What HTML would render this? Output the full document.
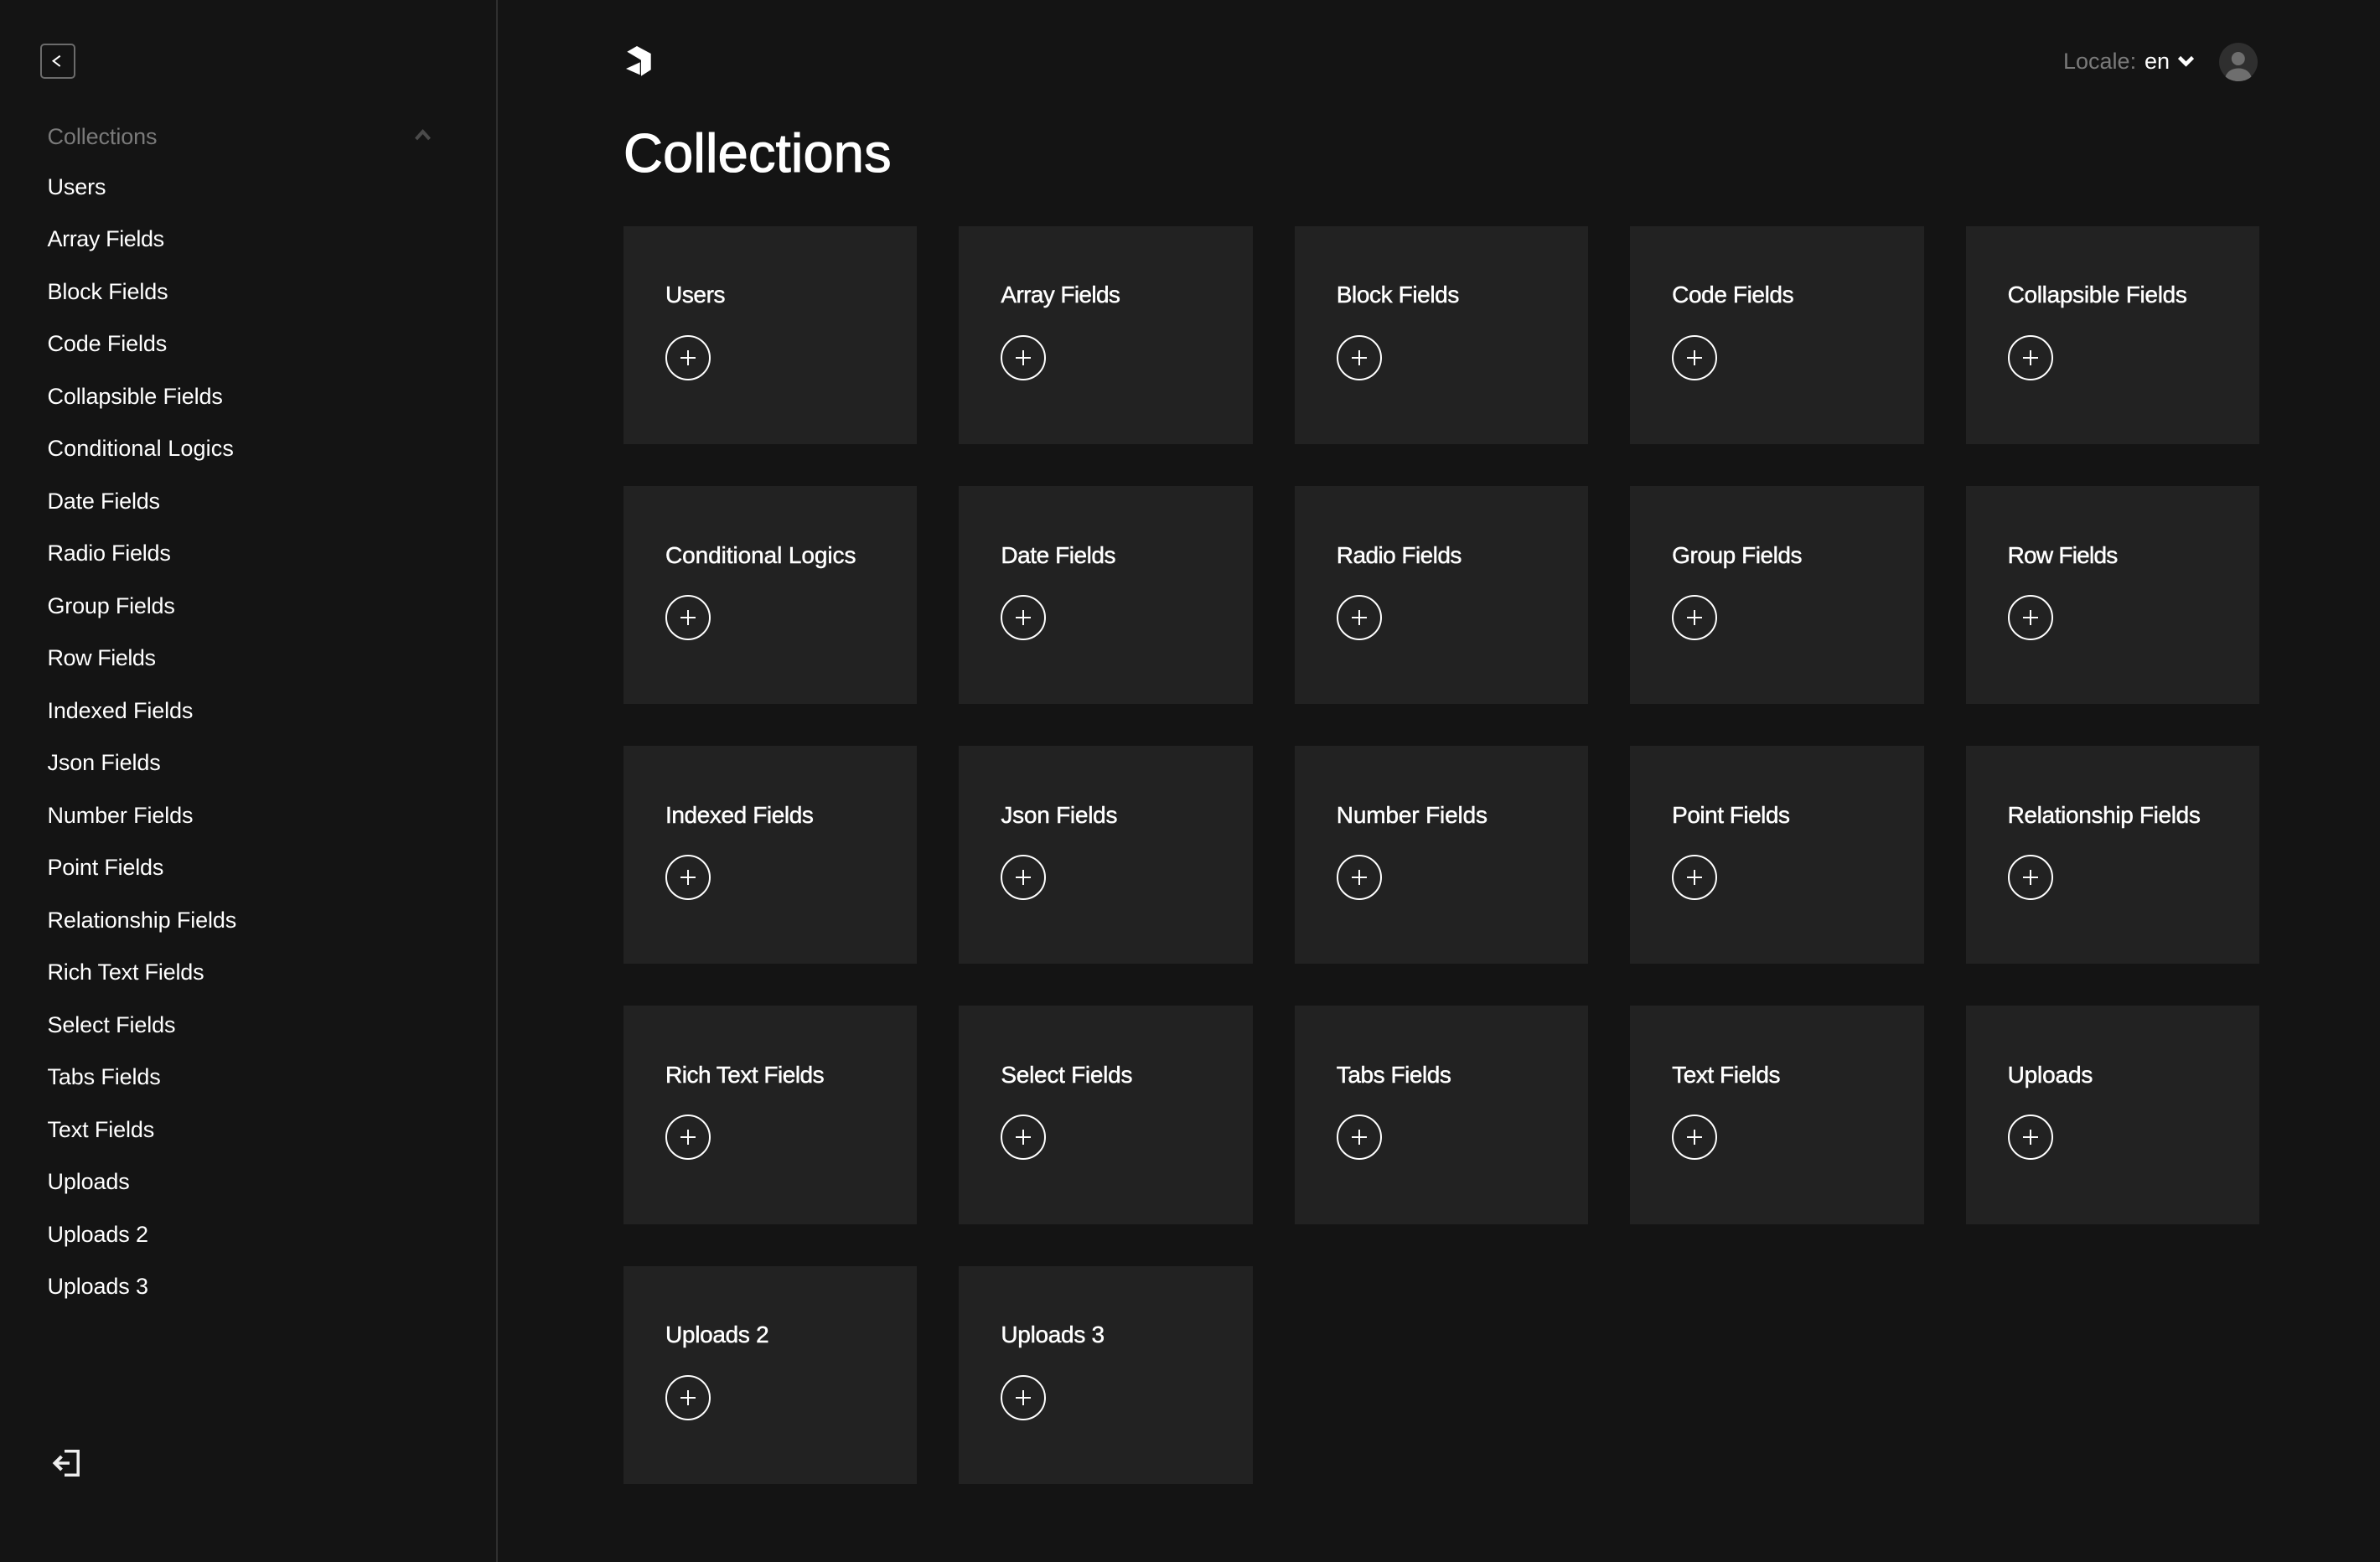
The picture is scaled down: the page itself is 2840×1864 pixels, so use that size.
<!DOCTYPE html>
<html lang="en">
<head>
<meta charset="utf-8">
<title>Collections</title>
<style>
*{box-sizing:border-box;margin:0;padding:0}
html,body{width:2840px;height:1864px;overflow:hidden;background:#141414;color:#fff;font-family:"Liberation Sans",sans-serif}
.abs{position:absolute}
#divider{left:592px;top:0;width:2px;height:1864px;background:#2f2f2f}
#back{left:48px;top:52px;width:42px;height:42px;border:2px solid #6b6b6b;border-radius:5px}
#navhead{left:56.500px;top:142.500px;font-size:27px;line-height:40px;letter-spacing:-.1px;color:#7a7a7a}
nav{position:absolute;left:56.500px;top:191.600px;width:500px}
nav div{height:62.500px;line-height:62.500px;font-size:27px;letter-spacing:-.13px;color:#fff;white-space:nowrap}
#grid{position:absolute;left:744px;top:270px;width:1952px;display:grid;grid-template-columns:repeat(5,350.4px);grid-auto-rows:260px;column-gap:50px;row-gap:50px}
.card{position:relative;background:#222}
.card:nth-child(n+16):nth-child(-n+20){height:261px}
.card:nth-child(n+21){top:1px}
.card b{position:absolute;left:50px;top:62.3px;font-weight:400;font-size:28px;line-height:40px;letter-spacing:-.4px;white-space:nowrap;-webkit-text-stroke:.45px #fff}
.card:nth-child(n+6):nth-child(-n+20) b{top:63px}
.card i{position:absolute;left:50px;top:130px;width:54px;height:54px;border:2px solid #fff;border-radius:50%}
.card i:before{content:"";position:absolute;left:16px;top:24px;width:18px;height:2px;background:#fff}
.card i:after{content:"";position:absolute;left:24px;top:16px;width:2px;height:18px;background:#fff}
h1{position:absolute;left:744px;top:145px;font-size:65px;line-height:75px;font-weight:400;letter-spacing:.17px;-webkit-text-stroke:1.1px #fff;white-space:nowrap}
#loc{left:2462px;top:53px;font-size:27px;line-height:40px;color:#7a7a7a;white-space:nowrap}
#en{left:2559px;top:53px;font-size:27px;line-height:40px;color:#fff}
svg{position:absolute;left:0;top:0}
</style>
</head>
<body>
<div class="abs" id="divider"></div>
<div class="abs" id="back"></div>
<div class="abs" id="navhead">Collections</div>
<nav>
<div>Users</div><div style="letter-spacing:-.4px">Array Fields</div><div>Block Fields</div><div>Code Fields</div><div>Collapsible Fields</div><div style="letter-spacing:.1px">Conditional Logics</div><div style="letter-spacing:-.2px">Date Fields</div><div style="letter-spacing:-.25px">Radio Fields</div><div style="letter-spacing:-.2px">Group Fields</div><div style="letter-spacing:-.45px">Row Fields</div><div>Indexed Fields</div><div>Json Fields</div><div>Number Fields</div><div style="letter-spacing:-.2px">Point Fields</div><div>Relationship Fields</div><div style="letter-spacing:-.2px">Rich Text Fields</div><div>Select Fields</div><div>Tabs Fields</div><div>Text Fields</div><div>Uploads</div><div>Uploads 2</div><div>Uploads 3</div>
</nav>
<h1>Collections</h1>
<div class="abs" id="loc">Locale:</div>
<div class="abs" id="en">en</div>
<div id="grid">
<div class="card"><b>Users</b><i></i></div>
<div class="card"><b style="letter-spacing:-.62px">Array Fields</b><i></i></div>
<div class="card"><b>Block Fields</b><i></i></div>
<div class="card"><b>Code Fields</b><i></i></div>
<div class="card"><b style="letter-spacing:-.3px">Collapsible Fields</b><i></i></div>
<div class="card"><b style="letter-spacing:-.08px">Conditional Logics</b><i></i></div>
<div class="card"><b style="letter-spacing:-.45px">Date Fields</b><i></i></div>
<div class="card"><b style="letter-spacing:-.55px">Radio Fields</b><i></i></div>
<div class="card"><b style="letter-spacing:-.45px">Group Fields</b><i></i></div>
<div class="card"><b style="letter-spacing:-.75px">Row Fields</b><i></i></div>
<div class="card"><b>Indexed Fields</b><i></i></div>
<div class="card"><b style="letter-spacing:-.25px">Json Fields</b><i></i></div>
<div class="card"><b style="letter-spacing:-.15px">Number Fields</b><i></i></div>
<div class="card"><b style="letter-spacing:-.5px">Point Fields</b><i></i></div>
<div class="card"><b style="letter-spacing:-.35px">Relationship Fields</b><i></i></div>
<div class="card"><b style="letter-spacing:-.5px">Rich Text Fields</b><i></i></div>
<div class="card"><b style="letter-spacing:-.27px">Select Fields</b><i></i></div>
<div class="card"><b style="letter-spacing:-.45px">Tabs Fields</b><i></i></div>
<div class="card"><b style="letter-spacing:-.45px">Text Fields</b><i></i></div>
<div class="card"><b style="letter-spacing:-.15px">Uploads</b><i></i></div>
<div class="card"><b style="letter-spacing:-.3px">Uploads 2</b><i></i></div>
<div class="card"><b style="letter-spacing:-.3px">Uploads 3</b><i></i></div>
</div>
<svg width="2840" height="1864" viewBox="0 0 2840 1864" fill="none">
<path d="M71.700 66.700 63.600 72.800 71.700 79" stroke="#fff" stroke-width="2"/>
<path d="M496.500 166 504.500 157 512.500 166" stroke="#4a4a4a" stroke-width="4"/>
<path d="M748.300 61.700 760 55 776.700 64V83.300L765 90.700V71.700Z" fill="#fff"/>
<path d="M747 82 763.700 74.300V89.300Z" fill="#fff"/>
<path d="M2600.500 68.500 2608.500 76.500 2616.500 68.500" stroke="#fff" stroke-width="4.500"/>
<circle cx="2671" cy="74" r="23" fill="#2f2f2f"/>
<circle cx="2670.800" cy="70" r="8" fill="#6e6e6e"/>
<path d="M2655.500 91.500C2657.500 85.500 2663 81.500 2671 81.500S2684.500 85.500 2686.500 91.500C2682.500 95 2677 97 2671 97S2659.500 95 2655.500 91.500Z" fill="#6e6e6e"/>
<path d="M77 1731.700H93.200V1760.300H77" stroke="#eee" stroke-width="3.500"/>
<path d="M83 1746H66" stroke="#eee" stroke-width="3.500"/>
<path d="M73.500 1738 65.500 1746 73.500 1754" stroke="#eee" stroke-width="4"/>
</svg>
</body>
</html>
